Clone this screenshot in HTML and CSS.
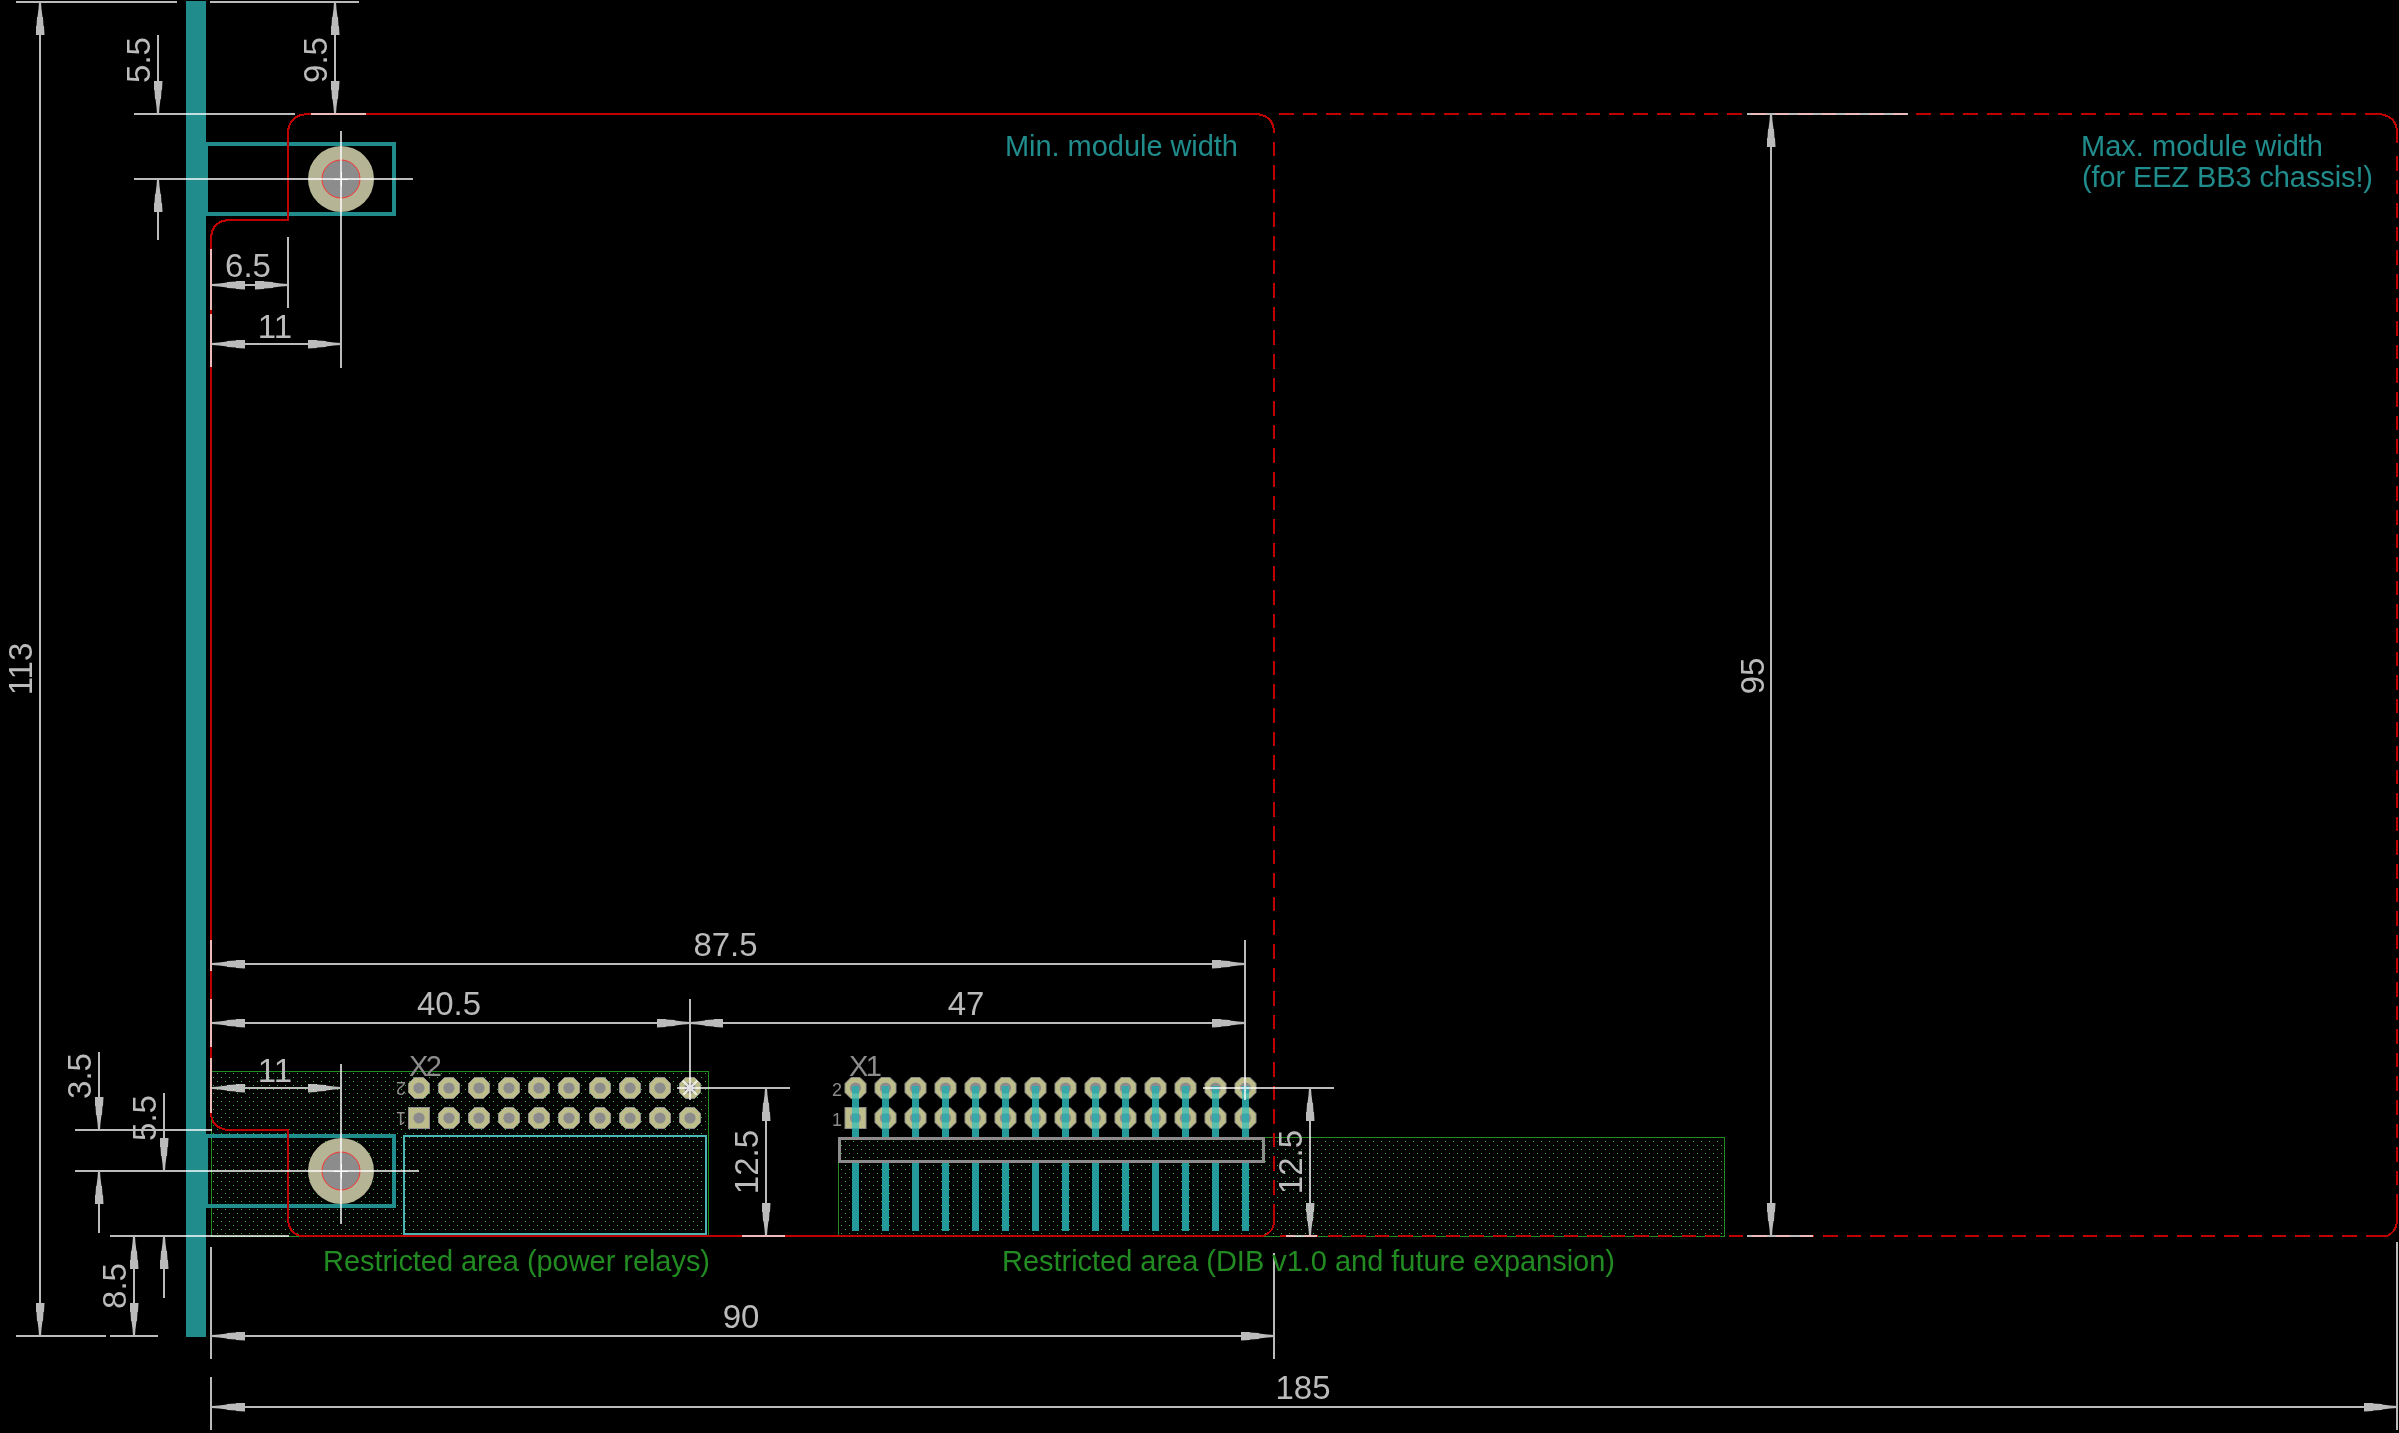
FILE: index.html
```html
<!DOCTYPE html>
<html lang="en">

<head>
    <meta charset="UTF-8">
    <title>EEZ BB3 module dimensions</title>
    <link rel="stylesheet" href="styles.css">
</head>

<body>
    <svg class="drawing" width="2399" height="1433" viewBox="0 0 2399 1433">
        <defs>
            <pattern id="dots" x="1" y="1" width="8" height="8" patternUnits="userSpaceOnUse">
                <rect class="dot" x="0" y="0" width="1" height="1" />
                <rect class="dot" x="4" y="4" width="1" height="1" />
            </pattern>
            <marker id="arrow" viewBox="0 0 33 9" refX="33" refY="4.5" markerWidth="33" markerHeight="9"
                markerUnits="userSpaceOnUse" orient="auto-start-reverse">
                <polygon class="arrow-head" points="0,0 9,0.5 9,1 18,1.5 18,2 26,3 33,3.5 33,5.5 26,6 18,7 18,7.5 9,8 9,8.5 0,9" />
            </marker>
            <g id="pad">
                <polygon class="pad" points="-4.5,-10.5 4.5,-10.5 10.5,-4.5 10.5,4.5 4.5,10.5 -4.5,10.5 -10.5,4.5 -10.5,-4.5" />
                <circle class="drill" r="5.6" />
            </g>
            <g id="pad-square">
                <rect class="pad" x="-10.5" y="-10.5" width="21" height="21" />
                <circle class="drill" r="5.6" />
            </g>
            <g id="pin">
                <rect class="pin" x="-3.5" y="1086" width="7" height="51" />
                <rect class="pin" x="-3.5" y="1162" width="7" height="69" />
                <rect class="pin-over" x="-3.5" y="1093" width="7" height="5.5" />
                <rect class="pin-over" x="-3.5" y="1107.5" width="7" height="21" />
                <rect class="pin-drill" x="-3.5" y="1086" width="7" height="7.5" />
                <rect class="pin-drill" x="-3.5" y="1113.5" width="7" height="9" />
            </g>
            <g id="mount">
                <circle class="washer" r="33" />
                <circle class="hole" r="19" />
            </g>
        </defs>

        <!-- front panel and restricted areas -->
        <rect class="panel" x="186" y="1" width="20" height="1336" />
        <rect class="restricted" x="211" y="1071" width="497" height="165" fill="url(#dots)" />
        <rect class="restricted" x="838" y="1137" width="886" height="99" fill="url(#dots)" />
        <rect class="relay-box" x="404" y="1136" width="302" height="98" />
        <rect class="slot" x="206" y="144" width="188" height="70" />
        <rect class="slot" x="206" y="1136" width="188" height="70" />
        <use href="#mount" x="341" y="179" />
        <use href="#mount" x="341" y="1171" />

        <!-- X2 -->
        <g>
            <use href="#pad" x="419" y="1088" />
            <use href="#pad" x="449" y="1088" />
            <use href="#pad" x="479" y="1088" />
            <use href="#pad" x="509" y="1088" />
            <use href="#pad" x="539" y="1088" />
            <use href="#pad" x="569" y="1088" />
            <use href="#pad" x="600" y="1088" />
            <use href="#pad" x="630" y="1088" />
            <use href="#pad" x="660" y="1088" />
            <use href="#pad" x="690" y="1088" />
            <use href="#pad-square" x="419" y="1118" />
            <use href="#pad" x="449" y="1118" />
            <use href="#pad" x="479" y="1118" />
            <use href="#pad" x="509" y="1118" />
            <use href="#pad" x="539" y="1118" />
            <use href="#pad" x="569" y="1118" />
            <use href="#pad" x="600" y="1118" />
            <use href="#pad" x="630" y="1118" />
            <use href="#pad" x="660" y="1118" />
            <use href="#pad" x="690" y="1118" />
        </g>

        <!-- X1 -->
        <g>
            <use href="#pad" x="855.5" y="1088" />
            <use href="#pad" x="885.5" y="1088" />
            <use href="#pad" x="915.5" y="1088" />
            <use href="#pad" x="945.5" y="1088" />
            <use href="#pad" x="975.5" y="1088" />
            <use href="#pad" x="1005.5" y="1088" />
            <use href="#pad" x="1035.5" y="1088" />
            <use href="#pad" x="1065.5" y="1088" />
            <use href="#pad" x="1095.5" y="1088" />
            <use href="#pad" x="1125.5" y="1088" />
            <use href="#pad" x="1155.5" y="1088" />
            <use href="#pad" x="1185.5" y="1088" />
            <use href="#pad" x="1215.5" y="1088" />
            <use href="#pad" x="1245.5" y="1088" />
            <use href="#pad-square" x="855.5" y="1118" />
            <use href="#pad" x="885.5" y="1118" />
            <use href="#pad" x="915.5" y="1118" />
            <use href="#pad" x="945.5" y="1118" />
            <use href="#pad" x="975.5" y="1118" />
            <use href="#pad" x="1005.5" y="1118" />
            <use href="#pad" x="1035.5" y="1118" />
            <use href="#pad" x="1065.5" y="1118" />
            <use href="#pad" x="1095.5" y="1118" />
            <use href="#pad" x="1125.5" y="1118" />
            <use href="#pad" x="1155.5" y="1118" />
            <use href="#pad" x="1185.5" y="1118" />
            <use href="#pad" x="1215.5" y="1118" />
            <use href="#pad" x="1245.5" y="1118" />
        </g>
        <g>
            <use href="#pin" x="855.5" />
            <use href="#pin" x="885.5" />
            <use href="#pin" x="915.5" />
            <use href="#pin" x="945.5" />
            <use href="#pin" x="975.5" />
            <use href="#pin" x="1005.5" />
            <use href="#pin" x="1035.5" />
            <use href="#pin" x="1065.5" />
            <use href="#pin" x="1095.5" />
            <use href="#pin" x="1125.5" />
            <use href="#pin" x="1155.5" />
            <use href="#pin" x="1185.5" />
            <use href="#pin" x="1215.5" />
            <use href="#pin" x="1245.5" />
        </g>
        <rect class="header" x="839.5" y="1138.5" width="424" height="23" />

        <!-- module outlines -->
        <path class="outline" d="M1263 1236 H300 Q288 1232 288 1218 V1130 H228 Q211 1128 211 1112 V240 Q211 220 231 220 H288 V134 Q288 114 310 114 H1257 Q1274 116 1274 133" />
        <path class="outline" d="M1274 1207 V1221 Q1274 1232 1263 1236" />
        <path class="outline outline-dash outline-side" d="M1274 133 V1207" />
        <path class="outline outline-dash" d="M1279 114 H2374" />
        <path class="outline" d="M2374 114 H2379 Q2397 116 2397 133 V143" />
        <path class="outline outline-dash" d="M2397 156 V1205" />
        <path class="outline" d="M2397 1205 V1222 Q2396 1232 2387 1236 H2366" />
        <path class="outline outline-dash" d="M1280.3 1236 H2366" />

        <!-- dimension lines -->
        <g class="dims">
            <line x1="16" y1="2" x2="177" y2="2" />
            <line x1="210" y1="2" x2="359" y2="2" />
            <line x1="134" y1="114" x2="295" y2="114" />
            <line x1="311" y1="114" x2="366" y2="114" />
            <line x1="1747" y1="114" x2="1908" y2="114" />
            <line x1="134" y1="179" x2="413" y2="179" />
            <line x1="75" y1="1130" x2="212" y2="1130" />
            <line x1="75" y1="1171" x2="419" y2="1171" />
            <line x1="110" y1="1236" x2="289" y2="1236" />
            <line x1="742" y1="1236" x2="785" y2="1236" />
            <line x1="1286" y1="1236" x2="1317" y2="1236" />
            <line x1="1747" y1="1236" x2="1813" y2="1236" />
            <line x1="16" y1="1336" x2="106" y2="1336" />
            <line x1="110" y1="1336" x2="158" y2="1336" />
            <line x1="677" y1="1088" x2="790" y2="1088" />
            <line x1="1203" y1="1088" x2="1334" y2="1088" />

            <line x1="341" y1="131" x2="341" y2="368" />
            <line x1="341" y1="1064" x2="341" y2="1224" />
            <line x1="288" y1="237" x2="288" y2="308" />
            <line x1="211" y1="249" x2="211" y2="310" />
            <line x1="211" y1="314" x2="211" y2="367" />
            <line x1="211" y1="940" x2="211" y2="971" />
            <line x1="211" y1="999" x2="211" y2="1047" />
            <line x1="211" y1="1058" x2="211" y2="1113" />
            <line x1="211" y1="1247" x2="211" y2="1359" />
            <line x1="211" y1="1377" x2="211" y2="1430" />
            <line x1="690" y1="999" x2="690" y2="1100" />
            <line x1="1245" y1="940" x2="1245" y2="1100" />
            <line x1="1274" y1="1253" x2="1274" y2="1359" />
            <line x1="2397" y1="1242" x2="2397" y2="1430" />
            <line x1="683" y1="1081" x2="697" y2="1095" />
            <line x1="697" y1="1081" x2="683" y2="1095" />

            <line x1="40" y1="2" x2="40" y2="1336" marker-start="url(#arrow)" marker-end="url(#arrow)" />
            <line x1="158" y1="35" x2="158" y2="114" marker-end="url(#arrow)" />
            <line x1="158" y1="240" x2="158" y2="179" marker-end="url(#arrow)" />
            <line x1="335" y1="2" x2="335" y2="114" marker-start="url(#arrow)" marker-end="url(#arrow)" />
            <line x1="212" y1="285" x2="288" y2="285" marker-start="url(#arrow)" marker-end="url(#arrow)" />
            <line x1="212" y1="344" x2="341" y2="344" marker-start="url(#arrow)" marker-end="url(#arrow)" />
            <line x1="212" y1="964" x2="1245" y2="964" marker-start="url(#arrow)" marker-end="url(#arrow)" />
            <line x1="212" y1="1023" x2="690" y2="1023" marker-start="url(#arrow)" marker-end="url(#arrow)" />
            <line x1="690" y1="1023" x2="1245" y2="1023" marker-start="url(#arrow)" marker-end="url(#arrow)" />
            <line x1="212" y1="1088" x2="341" y2="1088" marker-start="url(#arrow)" marker-end="url(#arrow)" />
            <line x1="99" y1="1052" x2="99" y2="1130" marker-end="url(#arrow)" />
            <line x1="99" y1="1233" x2="99" y2="1171" marker-end="url(#arrow)" />
            <line x1="164" y1="1093" x2="164" y2="1171" marker-end="url(#arrow)" />
            <line x1="164" y1="1298" x2="164" y2="1236" marker-end="url(#arrow)" />
            <line x1="134" y1="1236" x2="134" y2="1336" marker-start="url(#arrow)" marker-end="url(#arrow)" />
            <line x1="766" y1="1088" x2="766" y2="1236" marker-start="url(#arrow)" marker-end="url(#arrow)" />
            <line x1="1310" y1="1088" x2="1310" y2="1236" marker-start="url(#arrow)" marker-end="url(#arrow)" />
            <line x1="1771" y1="114" x2="1771" y2="1236" marker-start="url(#arrow)" marker-end="url(#arrow)" />
            <line x1="212" y1="1336" x2="1274" y2="1336" marker-start="url(#arrow)" marker-end="url(#arrow)" />
            <line x1="212" y1="1407" x2="2397" y2="1407" marker-start="url(#arrow)" marker-end="url(#arrow)" />
        </g>

        <path class="center-mark" d="M334 179 H348 M341 172 V186 M334 1171 H348 M341 1164 V1178" />

        <!-- dimension values -->
        <g class="dim-text">
            <text x="248" y="277">6.5</text>
            <text x="275" y="338">11</text>
            <text x="725.5" y="956">87.5</text>
            <text x="449" y="1015">40.5</text>
            <text x="966" y="1015">47</text>
            <text x="275" y="1082">11</text>
            <text x="741" y="1328">90</text>
            <text x="1303" y="1399">185</text>
            <text transform="rotate(-90 32 669)" x="32" y="669">113</text>
            <text transform="rotate(-90 150 60)" x="150" y="60">5.5</text>
            <text transform="rotate(-90 327 60)" x="327" y="60">9.5</text>
            <text transform="rotate(-90 91 1076)" x="91" y="1076">3.5</text>
            <text transform="rotate(-90 156 1118)" x="156" y="1118">5.5</text>
            <text transform="rotate(-90 126 1286)" x="126" y="1286">8.5</text>
            <text transform="rotate(-90 758 1162)" x="758" y="1162">12.5</text>
            <text transform="rotate(-90 1302 1162)" x="1302" y="1162">12.5</text>
            <text transform="rotate(-90 1764 676)" x="1764" y="676">95</text>
        </g>

        <!-- part names and pin numbers -->
        <text class="part-name" x="409" y="1076" textLength="33">X2</text>
        <text class="part-name" x="849" y="1076" textLength="33">X1</text>
        <text class="pin-number" transform="rotate(180 401 1088.5)" x="401" y="1095">2</text>
        <text class="pin-number" transform="rotate(180 401 1118.5)" x="401" y="1125">1</text>
        <text class="pin-number" x="837" y="1096">2</text>
        <text class="pin-number" x="837" y="1126">1</text>

        <!-- notes -->
        <text class="note" x="1005" y="156" textLength="233">Min. module width</text>
        <text class="note" x="2081" y="156" textLength="242">Max. module width</text>
        <text class="note" x="2082" y="187" textLength="291">(for EEZ BB3 chassis!)</text>
        <text class="area-note" x="323" y="1271" textLength="387">Restricted area (power relays)</text>
        <text class="area-note" x="1002" y="1271" textLength="613">Restricted area (DIB v1.0 and future expansion)</text>
    </svg>
</body>

</html>
```

FILE: styles.css
```css
body {
    margin: 0;
    background-color: #000;
}

.drawing {
    display: block;
    background-color: #000;
    font-family: "Liberation Sans", Arial, sans-serif;
}

.panel {
    fill: #218c8c;
}

.restricted {
    stroke: #228b22;
    stroke-width: 1;
    shape-rendering: crispEdges;
}

.dot {
    fill: #22c022;
}

.relay-box {
    fill: none;
    stroke: #4cb4b4;
    stroke-width: 2;
    shape-rendering: crispEdges;
}

.slot {
    fill: none;
    stroke: #218c8c;
    stroke-width: 4;
    shape-rendering: crispEdges;
}

.washer {
    fill: #b5b595;
}

.hole {
    fill: #8c8c8c;
    stroke: #ff3030;
    stroke-width: 1;
}

.pad {
    fill: #bdbd8c;
    stroke: #8c8c8c;
    stroke-width: 1;
}

.drill {
    fill: #8c8c8c;
}

.pin {
    fill: #259a9a;
}

.pin-over {
    fill: #5cbfae;
}

.pin-drill {
    fill: #38a8a8;
}

.header {
    fill: none;
    stroke: #8c8c8c;
    stroke-width: 3;
    shape-rendering: crispEdges;
}

.outline {
    fill: none;
    stroke: #bf0000;
    stroke-width: 2;
    shape-rendering: crispEdges;
}

.outline-dash {
    stroke-dasharray: 14.5 9.1;
}

.outline-side {
    stroke-dashoffset: 15;
}

.dims {
    stroke: #bbb;
    stroke-width: 2;
    shape-rendering: crispEdges;
    mix-blend-mode: screen;
}

.arrow-head {
    fill: #bbb;
    stroke: none;
}

.center-mark {
    fill: none;
    stroke: #fff;
    stroke-width: 1;
    shape-rendering: crispEdges;
}

.dim-text {
    fill: #bbb;
    font-size: 33px;
    text-anchor: middle;
}

.part-name {
    fill: #8c8c8c;
    font-size: 29px;
}

.pin-number {
    fill: #8c8c8c;
    font-size: 18px;
    text-anchor: middle;
}

.note {
    fill: #218c8c;
    font-size: 29px;
}

.area-note {
    fill: #228b22;
    font-size: 29px;
}
```
